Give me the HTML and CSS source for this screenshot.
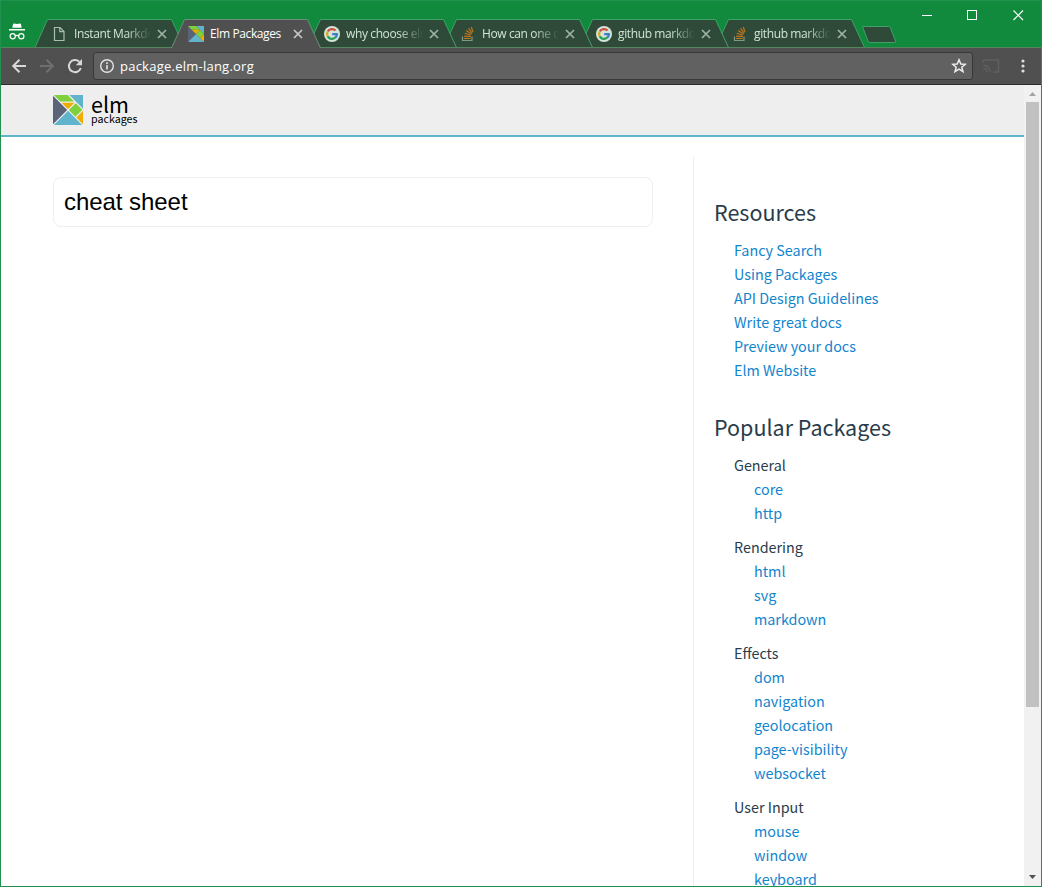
FILE: index.html
```html
<!DOCTYPE html>
<html lang="en">
<head>
<meta charset="utf-8">
<title>Elm Packages</title>
<link rel="stylesheet" href="styles.css">
</head>
<body>
<svg class="defs" width="0" height="0">
  <defs>
    <symbol id="close" viewBox="0 0 10 10"><path d="M1 1L9 9M9 1L1 9" fill="none" stroke="currentColor" stroke-width="1.7"/></symbol>
    <symbol id="google" viewBox="0 0 16 16">
      <circle cx="8" cy="8" r="8" fill="#d3e5da"/>
      <g fill="none" stroke-width="2.2">
        <path d="M11.6 4.6A4.9 4.9 0 0 0 3.7 5.6" stroke="#c8503c"/>
        <path d="M3.7 5.6A4.9 4.9 0 0 0 3.7 10.4" stroke="#d6aa22"/>
        <path d="M3.7 10.4A4.9 4.9 0 0 0 11.2 11.7" stroke="#2f9b55"/>
        <path d="M11.2 11.7A4.9 4.9 0 0 0 12.9 8.1H8.2" stroke="#3b7fc4"/>
      </g>
    </symbol>
    <symbol id="stack" viewBox="0 0 16 16">
      <path d="M2.5 10.500V14.500H12V10.500" fill="none" stroke="#7e9a8c" stroke-width="1.2"/>
      <path d="M4 12.500H10.600M4.100 10.100L10.700 10.700M4.800 7.300L11 9.200M6.200 4.600L11.500 8M8.500 2.300L12.200 7M11.300 1L13 6" fill="none" stroke="#c4761c" stroke-width="1.2"/>
    </symbol>
    <symbol id="elm" viewBox="0 0 30 30">
      <path d="M0 0L15 15L0 30Z" fill="#5a6378"/>
      <path d="M0 30L15 15L30 30Z" fill="#60b5cc"/>
      <path d="M0 0H15.5L22.5 7H7Z" fill="#7fd13b"/>
      <path d="M15.5 0H30V14.5Z" fill="#60b5cc"/>
      <path d="M7 7H22.5L15 15Z" fill="#f0ad00"/>
      <path d="M22.5 7L30 15L22.5 22.5L15 15Z" fill="#7fd13b"/>
      <path d="M30 15V30L22.5 22.5Z" fill="#f0ad00"/>
    </symbol>
  </defs>
</svg>
<div class="window">
  <div class="titlebar">
    <svg class="tab-shapes" width="1042" height="48" viewBox="0 0 1042 48">
      <g class="idle-shape">
        <path d="M715.5 47.5L728.5 19.5H851.5L864.5 47.5"/>
        <path d="M579.5 47.5L592.5 19.5H715.5L728.5 47.5"/>
        <path d="M443.5 47.5L456.5 19.5H579.5L592.5 47.5"/>
        <path d="M307.5 47.5L320.5 19.5H443.5L456.5 47.5"/>
        <path d="M35 47.5L47.5 19.5H171.5L184.5 47.5"/>
        <path d="M862.5 26.5H888.5Q890 26.5 890.5 28L895.5 41Q896 42.5 894.5 42.5H870Q868.5 42.5 868 41Z"/>
      </g>
      <path class="base-line" d="M1 47.5H1041"/>
      <path class="active-shape" d="M171.5 48L184.5 19.5H307.5L320.5 48"/>
    </svg>
    <svg class="incognito" width="18" height="18" viewBox="0 0 18 18" fill="#fff">
      <path d="M5 1.2Q5.2.5 6 .5L9 1L12 .5Q12.800 .5 13 1.200L13.700 4.800H4.300Z"/>
      <path d="M1 6H17V7.500H1Z"/>
      <path d="M7.200 13Q9 11.800 10.800 13" fill="none" stroke="#fff" stroke-width="1.200"/>
      <circle cx="4.700" cy="13.200" r="2.600" fill="none" stroke="#fff" stroke-width="1.200"/>
      <circle cx="13.300" cy="13.200" r="2.600" fill="none" stroke="#fff" stroke-width="1.200"/>
    </svg>
    <div class="tabs">
      <div class="tab"><svg class="fav" width="16" height="16" viewBox="0 0 16 16"><path d="M2.500 1.500H8L12 5.500V14.500H2.500ZM7.800 1.500V5.700H12" fill="none" stroke="#a9bdb1" stroke-width="1.200"/></svg><span class="tab-title fade">Instant Markdown</span><svg class="x" width="10" height="10"><use href="#close"/></svg></div>
      <div class="tab active"><svg class="fav" width="16" height="16"><use href="#elm"/></svg><span class="tab-title">Elm Packages</span><svg class="x" width="10" height="10"><use href="#close"/></svg></div>
      <div class="tab"><svg class="fav" width="16" height="16"><use href="#google"/></svg><span class="tab-title fade">why choose elm</span><svg class="x" width="10" height="10"><use href="#close"/></svg></div>
      <div class="tab"><svg class="fav" width="16" height="16"><use href="#stack"/></svg><span class="tab-title fade">How can one do</span><svg class="x" width="10" height="10"><use href="#close"/></svg></div>
      <div class="tab"><svg class="fav" width="16" height="16"><use href="#google"/></svg><span class="tab-title fade">github markdown</span><svg class="x" width="10" height="10"><use href="#close"/></svg></div>
      <div class="tab"><svg class="fav" width="16" height="16"><use href="#stack"/></svg><span class="tab-title fade">github markdown</span><svg class="x" width="10" height="10"><use href="#close"/></svg></div>
    </div>
    <svg class="controls" width="104" height="12" viewBox="0 0 104 12" fill="none" stroke="#fff">
      <path d="M0 5.500H10" /><rect x="45.500" y=".5" width="9" height="9"/><path d="M91.500 .5L101 10M101 .5L91.500 10" stroke-width="1.200"/>
    </svg>
  </div>
  <div class="toolbar">
    <svg width="16" height="16" viewBox="0 0 16 16" fill="none" stroke="#d8d8d8" stroke-width="2"><path d="M15 8H2.500M8.500 1.700L2.200 8L8.500 14.300"/></svg>
    <svg width="16" height="16" viewBox="0 0 16 16" fill="none" stroke="#6f6f6f" stroke-width="2"><path d="M1 8H13.500M7.500 1.700L13.800 8L7.500 14.300"/></svg>
    <svg width="16" height="16" viewBox="0 0 16 16" fill="none" stroke="#d8d8d8" stroke-width="2"><path d="M13.800 10A6.100 6.100 0 1 1 12.300 3.700"/><path d="M15 1V7.200H8.800Z" fill="#d8d8d8" stroke="none"/></svg>
    <div class="address">
      <svg width="16" height="16" viewBox="0 0 16 16"><circle cx="8" cy="8" r="6.300" fill="none" stroke="#e4e4e4" stroke-width="1.400"/><path d="M7.200 7H8.800V11.500H7.200ZM7.200 4.300H8.800V5.900H7.200Z" fill="#e4e4e4"/></svg>
      <span class="url">package.elm-lang.org</span>
      <svg width="16" height="16" viewBox="0 0 16 16"><path d="M8 1.800L9.800 6L14.300 6.300L10.800 9.200L12 13.700L8 11.200L4 13.700L5.200 9.200L1.700 6.300L6.200 6Z" fill="none" stroke="#ededed" stroke-width="1.500"/></svg>
    </div>
    <svg class="cast" width="18" height="16" viewBox="0 0 18 16" fill="none" stroke="#5f5f5f" stroke-width="1.500"><path d="M1.500 5V2H16.500V14H11M1.500 7.200A6.500 6.500 0 0 1 8 14M1.500 10.200A3.600 3.600 0 0 1 5 14"/><path d="M1 12.500V14.500H3Z" fill="#5f5f5f" stroke="none"/></svg>
    <svg class="more" width="4" height="14" viewBox="0 0 4 14" fill="#e0e0e0"><circle cx="2" cy="2" r="1.600"/><circle cx="2" cy="7" r="1.600"/><circle cx="2" cy="12" r="1.600"/></svg>
  </div>
  <div class="viewport">
    <div class="page">
      <header class="header">
        <svg class="logo" width="30" height="30" viewBox="0 0 30 30"><use href="#elm"/><path d="M0 0L30 30M0 30L22.500 7.500M15.500 0L30 14.500M7 7.200H22.500M30 15L22.500 22.500" fill="none" stroke="#eee" stroke-width="1.200"/></svg>
        <div class="brand"><div class="brand-name">elm</div><div class="brand-sub">packages</div></div>
      </header>
      <main class="content">
        <div class="search">cheat sheet</div>
        <aside class="sidebar">
          <h2>Resources</h2>
          <ul class="resources">
            <li><a>Fancy Search</a></li><li><a>Using Packages</a></li><li><a>API Design Guidelines</a></li><li><a>Write great docs</a></li><li><a>Preview your docs</a></li><li><a>Elm Website</a></li>
          </ul>
          <h2>Popular Packages</h2>
          <ul class="group"><li>General</li><li><a>core</a></li><li><a>http</a></li></ul>
          <ul class="group"><li>Rendering</li><li><a>html</a></li><li><a>svg</a></li><li><a>markdown</a></li></ul>
          <ul class="group"><li>Effects</li><li><a>dom</a></li><li><a>navigation</a></li><li><a>geolocation</a></li><li><a>page-visibility</a></li><li><a>websocket</a></li></ul>
          <ul class="group"><li>User Input</li><li><a>mouse</a></li><li><a>window</a></li><li><a>keyboard</a></li></ul>
        </aside>
      </main>
    </div>
    <div class="scrollbar">
      <svg width="17" height="17"><path d="M5 11H12L8.500 7Z" fill="#a3a3a3"/></svg>
      <div class="thumb"></div>
      <svg class="down" width="17" height="17"><path d="M5 6H12L8.500 10Z" fill="#505050"/></svg>
    </div>
  </div>
</div>
</body>
</html>
```
FILE: styles.css
```css
* { box-sizing: border-box; }
body { margin: 0; overflow: hidden; }
svg { display: block; flex: none; }
.defs { position: absolute; }
ul, h2 { margin: 0; padding: 0; list-style: none; font-weight: 400; }

.window { width: 1042px; height: 887px; display: flex; flex-direction: column; border: 1px solid #219150; overflow: hidden; background: #fff; }

.titlebar { position: relative; height: 47px; flex: none; display: flex; background: #118a3e; }
.tab-shapes { position: absolute; left: -1px; top: -1px; }
.idle-shape { fill: #304a39; stroke: #3fa168; }
.base-line { stroke: #55855f; }
.active-shape { fill: #505050; stroke: #6b8f78; }
.incognito { margin: 22px 0 0 7px; }
.tabs { position: relative; display: flex; margin-left: 26px; padding-top: 19px; }
.tab { width: 136px; height: 28px; display: flex; align-items: center; color: #d0e4d7; font: 12px/16px "Open Sans", "Noto Sans", sans-serif; }
.tab.active { color: #fff; }
.tab .fav { margin-right: 6px; }
.tab-title { width: 77px; overflow: hidden; white-space: nowrap; letter-spacing: -0.38px; }
.fade { -webkit-mask-image: linear-gradient(to right, #000 68%, transparent 100%); mask-image: linear-gradient(to right, #000 68%, transparent 100%); }
.tab .x { margin-left: 6px; color: #9fb3a6; }
.tab.active .x { color: #c8c8c8; }
.controls { position: relative; margin: 9px 15px 0 auto; }

.toolbar { height: 37px; flex: none; display: flex; align-items: center; padding: 0 16px 0 10px; gap: 12px; background: #505050; border-bottom: 1px solid #2b2b2b; }
.address { width: 880px; height: 28px; margin-left: -2px; display: flex; align-items: center; padding: 0 5px; background: #616161; border: 1px solid #383838; border-radius: 3px; }
.url { flex: 1; margin-left: 5px; color: #fff; font: 13px/18px "Open Sans", "Noto Sans", sans-serif; letter-spacing: 0.24px; }
.cast { margin-left: -3px; }
.more { margin-left: auto; }

.viewport { flex: 1; min-height: 0; display: flex; }
.page { width: 1023px; overflow: hidden; font-family: "Noto Sans CJK SC", "Noto Sans", sans-serif; color: #293c4b; }
.header { height: 52px; display: flex; align-items: flex-start; padding: 10px 0 0 52px; background: #eee; border-bottom: 2px solid #60b5cc; }
.brand { margin: -3px 0 0 8px; color: #000; }
.brand-name { height: 21px; font-size: 21.500px; line-height: 23px; }
.brand-sub { font-size: 10.700px; line-height: 12px; }
.content { display: flex; align-items: flex-start; padding: 20px 0 0 52px; }
.search { width: 600px; height: 50px; margin: 20px 40px 0 0; padding: 0 10px; border: 1px solid #eee; border-radius: 8px; color: #000; font: 24px/48px "Liberation Sans", Arial, sans-serif; letter-spacing: -0.05px; }
.sidebar { flex: 1; height: 760px; padding: 40px 0 0 20px; border-left: 1px solid #eee; font-size: 14.350px; line-height: 24px; }
.sidebar h2 { height: 30px; margin-bottom: 11px; font-size: 21.500px; line-height: 30px; }
.sidebar a { color: #1184ce; }
.resources { padding-left: 20px; margin-bottom: 30px; }
.group { padding-left: 20px; margin-bottom: 10px; }
.group li + li { padding-left: 20px; }

.scrollbar { width: 17px; flex: none; display: flex; flex-direction: column; background: #f1f1f1; }
.thumb { width: 13px; height: 605px; margin-left: 2px; background: #c1c1c1; }
.down { margin-top: auto; }
```
